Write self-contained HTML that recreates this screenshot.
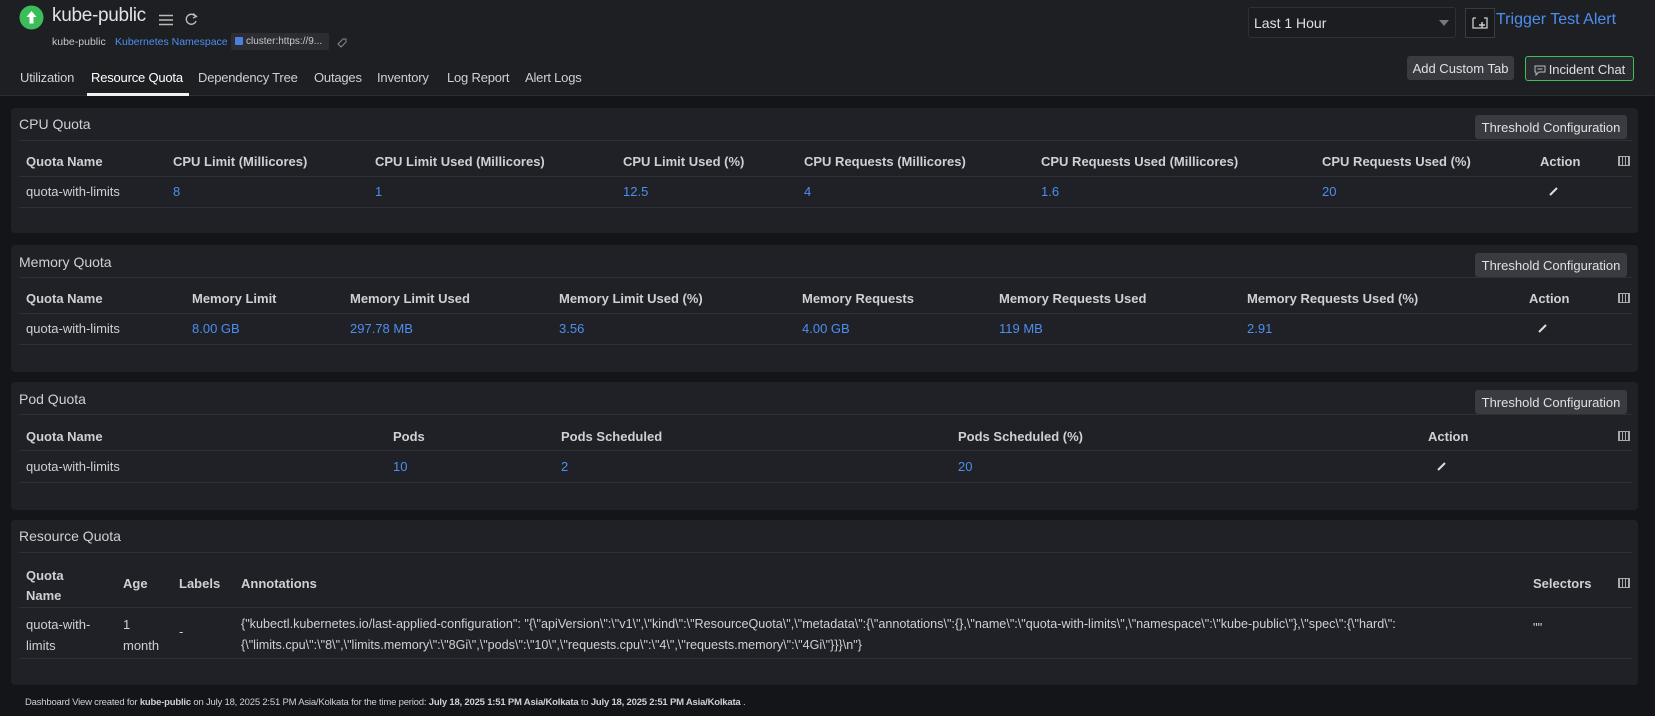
<!DOCTYPE html>
<html><head><meta charset="utf-8"><style>
*{margin:0;padding:0;box-sizing:border-box}
body{width:1655px;height:716px;background:#141518;font-family:"Liberation Sans",sans-serif;color:#d4d5d8;position:relative;overflow:hidden}
.a{position:absolute;white-space:nowrap}
.hdr{position:absolute;left:0;top:0;width:1655px;height:96px;background:#1e1f22;border-bottom:1px solid #2c2d31}
.panel{position:absolute;left:11px;width:1627px;background:#202126;border-radius:4px}
.ttl{position:absolute;left:8px;font-size:14px;color:#cfd0d3}
.ln{position:absolute;left:8px;width:1613px;height:1px;background:#2e3035}
.th{position:absolute;font-size:13px;font-weight:bold;color:#cfd0d4;white-space:nowrap}
.td{position:absolute;font-size:13px;color:#cfd0d4;white-space:nowrap}
.bl{color:#4d8ef0}
.btn{position:absolute;background:#3a3b41;border-radius:3px;color:#e0e0e3;font-size:13px;text-align:center}
.tab{position:absolute;top:70px;font-size:13px;color:#cfd0d3;letter-spacing:-0.2px}
</style></head><body>
<div class="hdr">
<svg class="a" style="left:19px;top:5px" width="25" height="25"><circle cx="12.5" cy="12.5" r="12" fill="#3bbd5a"/><path d="M12.5 6 L7.5 12 H10.5 V18.5 H14.5 V12 H17.5Z" fill="#fff"/></svg>
<div class="a" style="left:52px;top:5px;font-size:19px;color:#e3e3e5;letter-spacing:-0.3px">kube-public</div>
<svg class="a" style="left:159px;top:14px" width="14" height="12"><path d="M0 1.5H14M0 6H14M0 10.5H14" stroke="#bbb" stroke-width="1.6"/></svg>
<svg class="a" style="left:184px;top:12px" width="14" height="14"><path d="M11.5 4.5 A5 5 0 1 0 12 9" fill="none" stroke="#bbb" stroke-width="1.4"/><path d="M9 1.5 L12.5 4.5 L9 6" fill="none" stroke="#bbb" stroke-width="1.3"/></svg>
<div class="a" style="left:52px;top:36px;font-size:10.5px;color:#c8c8cb">kube-public</div>
<div class="a" style="left:115px;top:36px;font-size:10.5px;color:#4d8ef0">Kubernetes Namespace</div>
<div class="a" style="left:231px;top:33px;width:98px;height:17px;background:#2c2d32;border-radius:2px;font-size:10px;color:#c8c8cb;padding:3px 0 0 4px;overflow:hidden"><span style="display:inline-block;width:8px;height:8px;background:#4d7fe0;border-radius:1px;margin-right:3px;vertical-align:-1px"></span>cluster:https://9...</div>
<svg class="a" style="left:336px;top:37px" width="12" height="12"><path d="M2 7 L7 2 H10 V5 L5 10Z" fill="none" stroke="#888" stroke-width="1"/></svg>
<div class="tab" style="left:20px">Utilization</div>
<div class="tab" style="left:91px;color:#fff">Resource Quota</div>
<div class="a" style="left:87px;top:93px;width:102px;height:3px;background:#f2f2f2"></div>
<div class="tab" style="left:198px">Dependency Tree</div>
<div class="tab" style="left:314px">Outages</div>
<div class="tab" style="left:377px">Inventory</div>
<div class="tab" style="left:447px">Log Report</div>
<div class="tab" style="left:525px">Alert Logs</div>
<div class="a" style="left:1248px;top:7px;width:208px;height:31px;border:1px solid #2f3035;border-radius:3px;background:#1c1d20;font-size:14px;color:#e0e0e2;padding:7px 0 0 5px">Last 1 Hour</div>
<svg class="a" style="left:1439px;top:20px" width="10" height="6"><path d="M0 0H10L5 6Z" fill="#777"/></svg>
<div class="a" style="left:1465px;top:8px;width:30px;height:30px;border:1px solid #3a3b40;background:#1a1b1e"></div>
<svg class="a" style="left:1472px;top:15px" width="16" height="15"><path d="M1 3H4M12 3H15V13H1V3" fill="none" stroke="#ccc" stroke-width="1.3"/><path d="M10 7V13M7 10H13" stroke="#ccc" stroke-width="1.5"/></svg>
<div class="a" style="left:1496px;top:11px;font-size:16px;color:#4d8ef0">Trigger Test Alert</div>
<div class="btn" style="left:1407px;top:56px;width:107px;height:24px;padding-top:5px">Add Custom Tab</div>
<div class="btn" style="left:1525px;top:56px;width:109px;height:25px;padding-top:5px;background:#2a2b30;border:1px solid #3fbf5a">
<svg style="vertical-align:-2px;margin-right:3px" width="12" height="11"><path d="M1 1H11V7H5L2 10V7H1Z" fill="none" stroke="#bbb" stroke-width="1"/><path d="M3.5 4H8.5" stroke="#bbb"/></svg>Incident Chat</div>
</div>

<!-- CPU -->
<div class="panel" style="top:108px;height:125px">
<div class="ttl" style="top:8px">CPU Quota</div>
<div class="btn" style="left:1464px;top:7px;width:152px;height:24px;padding-top:5px">Threshold Configuration</div>
<div class="ln" style="top:32px"></div>
<div class="th" style="left:15px;top:46px">Quota Name</div>
<div class="th" style="left:162px;top:46px">CPU Limit (Millicores)</div>
<div class="th" style="left:364px;top:46px">CPU Limit Used (Millicores)</div>
<div class="th" style="left:612px;top:46px">CPU Limit Used (%)</div>
<div class="th" style="left:793px;top:46px">CPU Requests (Millicores)</div>
<div class="th" style="left:1030px;top:46px">CPU Requests Used (Millicores)</div>
<div class="th" style="left:1311px;top:46px">CPU Requests Used (%)</div>
<div class="th" style="left:1529px;top:46px">Action</div>
<div class="a" style="left:1607px;top:48px;width:12px;height:10px;border:1px solid #aaa;background:repeating-linear-gradient(90deg,#aaa 0 1px,transparent 1px 3px)"></div>
<div class="ln" style="top:68px"></div>
<div class="td" style="left:15px;top:76px">quota-with-limits</div>
<div class="td bl" style="left:162px;top:76px">8</div>
<div class="td bl" style="left:364px;top:76px">1</div>
<div class="td bl" style="left:612px;top:76px">12.5</div>
<div class="td bl" style="left:793px;top:76px">4</div>
<div class="td bl" style="left:1030px;top:76px">1.6</div>
<div class="td bl" style="left:1311px;top:76px">20</div>
<svg class="a" style="left:1538px;top:78px" width="10" height="10"><path d="M1 9L8 2" stroke="#ddd" stroke-width="2"/></svg>
<div class="ln" style="top:99px"></div>
</div>

<!-- Memory -->
<div class="panel" style="top:245px;height:127px">
<div class="ttl" style="top:9px">Memory Quota</div>
<div class="btn" style="left:1464px;top:8px;width:152px;height:24px;padding-top:5px">Threshold Configuration</div>
<div class="ln" style="top:32px"></div>
<div class="th" style="left:15px;top:46px">Quota Name</div>
<div class="th" style="left:181px;top:46px">Memory Limit</div>
<div class="th" style="left:339px;top:46px">Memory Limit Used</div>
<div class="th" style="left:548px;top:46px">Memory Limit Used (%)</div>
<div class="th" style="left:791px;top:46px">Memory Requests</div>
<div class="th" style="left:988px;top:46px">Memory Requests Used</div>
<div class="th" style="left:1236px;top:46px">Memory Requests Used (%)</div>
<div class="th" style="left:1518px;top:46px">Action</div>
<div class="a" style="left:1607px;top:48px;width:12px;height:10px;border:1px solid #aaa;background:repeating-linear-gradient(90deg,#aaa 0 1px,transparent 1px 3px)"></div>
<div class="ln" style="top:68px"></div>
<div class="td" style="left:15px;top:76px">quota-with-limits</div>
<div class="td bl" style="left:181px;top:76px">8.00 GB</div>
<div class="td bl" style="left:339px;top:76px">297.78 MB</div>
<div class="td bl" style="left:548px;top:76px">3.56</div>
<div class="td bl" style="left:791px;top:76px">4.00 GB</div>
<div class="td bl" style="left:988px;top:76px">119 MB</div>
<div class="td bl" style="left:1236px;top:76px">2.91</div>
<svg class="a" style="left:1527px;top:78px" width="10" height="10"><path d="M1 9L8 2" stroke="#ddd" stroke-width="2"/></svg>
<div class="ln" style="top:99px"></div>
</div>

<!-- Pod -->
<div class="panel" style="top:382px;height:128px">
<div class="ttl" style="top:9px">Pod Quota</div>
<div class="btn" style="left:1464px;top:8px;width:152px;height:24px;padding-top:5px">Threshold Configuration</div>
<div class="ln" style="top:32px"></div>
<div class="th" style="left:15px;top:47px">Quota Name</div>
<div class="th" style="left:382px;top:47px">Pods</div>
<div class="th" style="left:550px;top:47px">Pods Scheduled</div>
<div class="th" style="left:947px;top:47px">Pods Scheduled (%)</div>
<div class="th" style="left:1417px;top:47px">Action</div>
<div class="a" style="left:1607px;top:49px;width:12px;height:10px;border:1px solid #aaa;background:repeating-linear-gradient(90deg,#aaa 0 1px,transparent 1px 3px)"></div>
<div class="ln" style="top:68px"></div>
<div class="td" style="left:15px;top:77px">quota-with-limits</div>
<div class="td bl" style="left:382px;top:77px">10</div>
<div class="td bl" style="left:550px;top:77px">2</div>
<div class="td bl" style="left:947px;top:77px">20</div>
<svg class="a" style="left:1426px;top:79px" width="10" height="10"><path d="M1 9L8 2" stroke="#ddd" stroke-width="2"/></svg>
<div class="ln" style="top:100px"></div>
</div>

<!-- Resource Quota -->
<div class="panel" style="top:520px;height:165px">
<div class="ttl" style="top:8px">Resource Quota</div>
<div class="ln" style="top:32px"></div>
<div class="th" style="left:15px;top:46px;line-height:20px">Quota<br>Name</div>
<div class="th" style="left:112px;top:56px">Age</div>
<div class="th" style="left:168px;top:56px">Labels</div>
<div class="th" style="left:230px;top:56px">Annotations</div>
<div class="th" style="left:1522px;top:56px">Selectors</div>
<div class="a" style="left:1607px;top:58px;width:12px;height:10px;border:1px solid #aaa;background:repeating-linear-gradient(90deg,#aaa 0 1px,transparent 1px 3px)"></div>
<div class="ln" style="top:87px"></div>
<div class="td" style="left:15px;top:94px;line-height:21px">quota-with-<br>limits</div>
<div class="td" style="left:112px;top:94px;line-height:21px">1<br>month</div>
<div class="td" style="left:168px;top:104px">-</div>
<div class="td" style="left:230px;top:94px;line-height:21px;font-size:12.6px">{"kubectl.kubernetes.io/last-applied-configuration": "{\"apiVersion\":\"v1\",\"kind\":\"ResourceQuota\",\"metadata\":{\"annotations\":{},\"name\":\"quota-with-limits\",\"namespace\":\"kube-public\"},\"spec\":{\"hard\":<br>{\"limits.cpu\":\"8\",\"limits.memory\":\"8Gi\",\"pods\":\"10\",\"requests.cpu\":\"4\",\"requests.memory\":\"4Gi\"}}}\n"}</div>
<div class="td" style="left:1522px;top:100px">""</div>
<div class="ln" style="top:138px"></div>
</div>

<div class="a" style="left:25px;top:697px;font-size:9.5px;color:#cfd0d3;letter-spacing:-0.2px">Dashboard View created for <b>kube-public</b> on July 18, 2025 2:51 PM Asia/Kolkata for the time period: <b>July 18, 2025 1:51 PM Asia/Kolkata</b> to <b>July 18, 2025 2:51 PM Asia/Kolkata</b> .</div>
</body></html>
